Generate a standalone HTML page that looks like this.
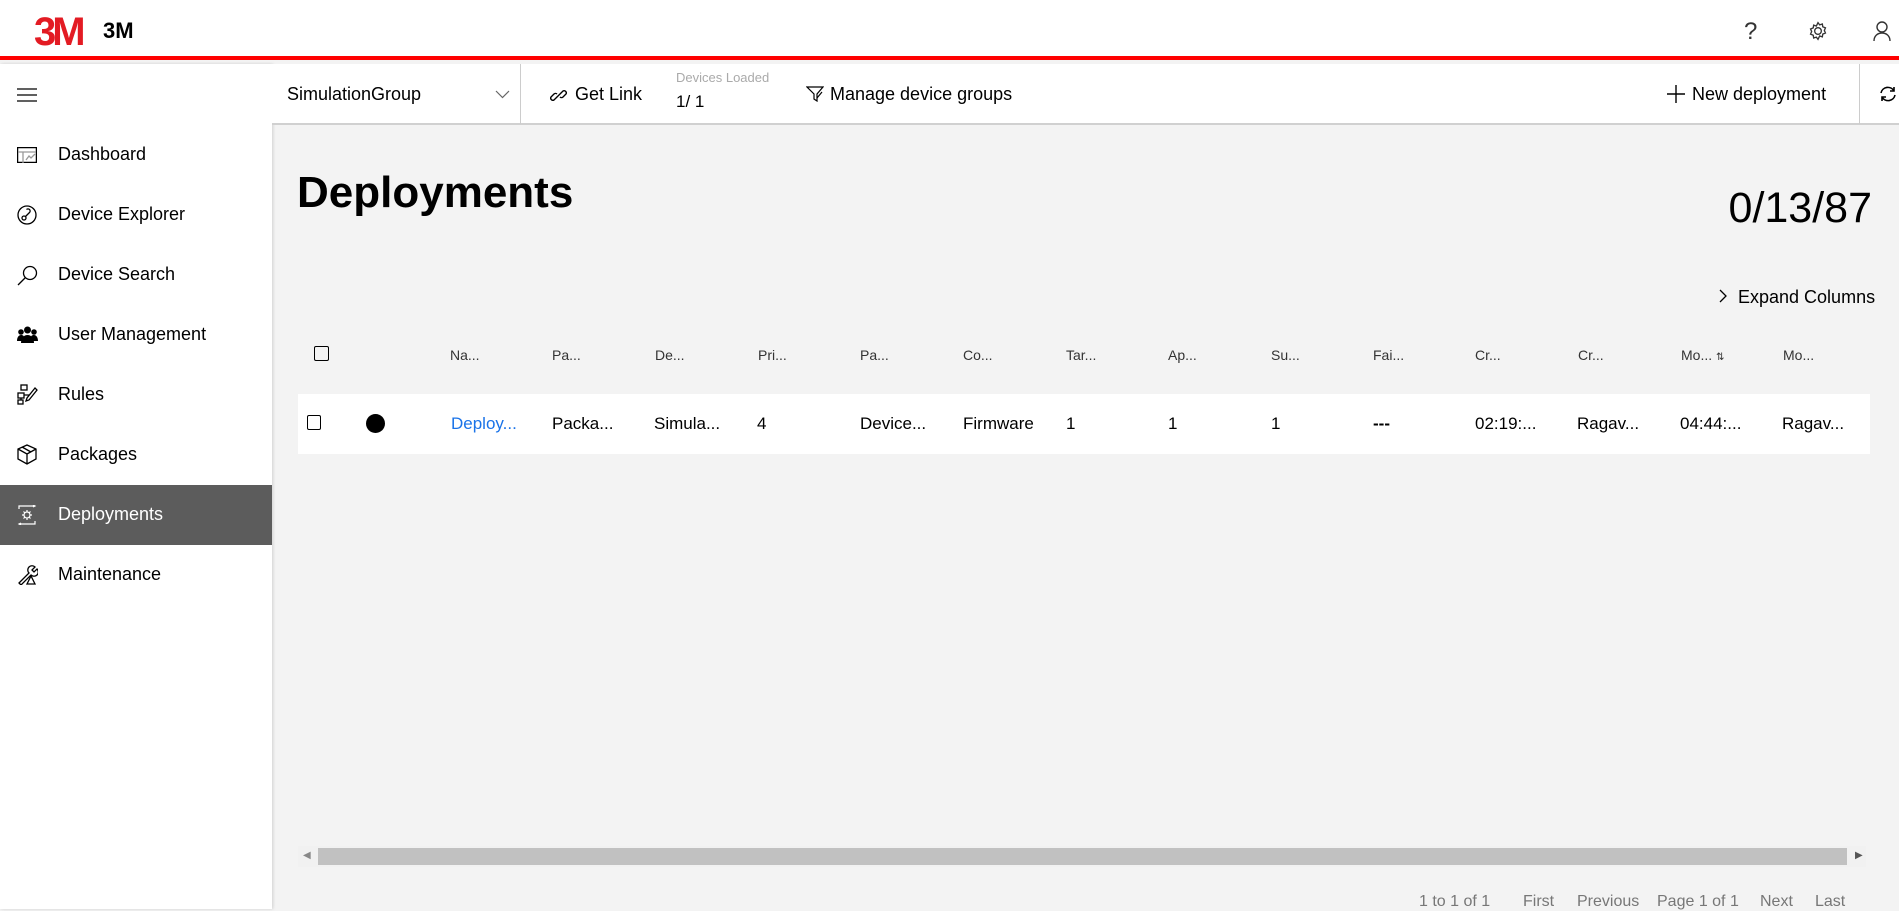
<!DOCTYPE html>
<html><head><meta charset="utf-8"><style>
*{margin:0;padding:0;box-sizing:border-box}
body{width:1899px;height:909px;overflow:hidden;font-family:"Liberation Sans",sans-serif;background:#f3f3f3;position:relative;color:#000}
.a{position:absolute;white-space:nowrap}
#hdr{left:0;top:0;width:1899px;height:60px;background:#fff;border-bottom:4px solid #f00}
#side{left:0;top:64px;width:272px;height:845px;background:#fff;box-shadow:1px 0 3px rgba(0,0,0,.15)}
#tb{left:272px;top:64px;width:1627px;height:61px;background:#fff;border-bottom:2px solid #d0d0d0}
.nav{position:absolute;left:58px;font-size:18px}
.ic{position:absolute;left:17px}
.th{font-size:14px;color:#333;top:347px}
.td{font-size:17px;top:414px}
.pg{font-size:16px;color:#777;top:893px}
</style></head><body>
<div id="hdr" class="a">
 <div class="a" style="left:34px;top:12px;font:bold 40px 'Liberation Sans',sans-serif;color:#e31b23;letter-spacing:-4px;line-height:40px">3M</div>
 <div class="a" style="left:103px;top:18px;font:bold 22px 'Liberation Sans',sans-serif">3M</div>
 <div class="a" style="left:1744px;top:18px;font-size:24px;color:#333">?</div>
 <svg class="a" style="left:1808px;top:21px" width="20" height="20" viewBox="0 0 18 18" fill="none" stroke="#333" stroke-width="1.2"><circle cx="9" cy="9" r="3"/><path d="M9 1.5l1.5 2 2.4-.8.4 2.5 2.4 1-1 2.3 1 2.3-2.4 1-.4 2.5-2.4-.8L9 16.5l-1.5-2-2.4.8-.4-2.5-2.4-1 1-2.3-1-2.3 2.4-1 .4-2.5 2.4.8z"/></svg>
 <svg class="a" style="left:1873px;top:20px" width="18" height="22" viewBox="0 0 18 22" fill="none" stroke="#333" stroke-width="1.4"><circle cx="9" cy="7" r="5"/><path d="M1 21c0-5 3.5-8 8-8s8 3 8 8"/></svg>
</div>
<div id="side" class="a">
 <svg class="ic" style="top:24px" width="20" height="14"><path d="M0 1h20M0 7h20M0 13h20" stroke="#000" stroke-width="1.2"/></svg>
 <svg class="ic" style="top:83px" width="20" height="16" fill="none" stroke="#000" stroke-width="1.3"><rect x=".6" y=".6" width="18.8" height="14.8"/><path d="M1 5h18M6 5v11M9 13l3-4 2 2 4-4" stroke="#999"/></svg>
 <div class="nav" style="top:80px">Dashboard</div>
 <svg class="ic" style="top:141px" width="20" height="20" fill="none" stroke="#000" stroke-width="1.3"><circle cx="10" cy="10" r="9"/><circle cx="7" cy="13" r="2"/><path d="M8.5 11.5l4-4a2 2 0 0 0-3-3"/></svg>
 <div class="nav" style="top:140px">Device Explorer</div>
 <svg class="ic" style="top:201px" width="21" height="21" fill="none" stroke="#000" stroke-width="1.3"><circle cx="13" cy="8" r="6.5"/><path d="M8.5 12.5L1 20"/></svg>
 <div class="nav" style="top:200px">Device Search</div>
 <svg class="ic" style="top:262px" width="21" height="18" fill="#000"><circle cx="10.5" cy="4" r="3.5"/><circle cx="4" cy="6" r="2.8"/><circle cx="17" cy="6" r="2.8"/><path d="M4 17c0-5 3-8 6.5-8s6.5 3 6.5 8z"/><path d="M0 15c0-4 2-6 4-6s3 1 3 2v4zM21 15c0-4-2-6-4-6s-3 1-3 2v4z"/></svg>
 <div class="nav" style="top:260px">User Management</div>
 <svg class="ic" style="top:320px" width="21" height="21" fill="none" stroke="#000" stroke-width="1.3"><rect x="4" y="1" width="6" height="5"/><rect x="1" y="9" width="6" height="5"/><rect x="1" y="16" width="5" height="4"/><path d="M7 11h5M4 14v2M18 4l-8 10 -1 3 3-1 8-10z"/></svg>
 <div class="nav" style="top:320px">Rules</div>
 <svg class="ic" style="top:380px" width="20" height="21" fill="none" stroke="#000" stroke-width="1.3"><path d="M10 1l9 4v10l-9 5-9-5V5zM1 5l9 5 9-5M10 10v10M5 3l9 5"/></svg>
 <div class="nav" style="top:380px">Packages</div>
 <div class="a" style="left:0;top:421px;width:272px;height:60px;background:#5c5c5c"></div>
 <svg class="ic" style="top:441px" width="20" height="20" fill="none" stroke="#fff" stroke-width="1.2"><path d="M2 4V1h16M16 0l2 1-2 1M18 16v3H2M4 18l-2 1 2 1"/><circle cx="10" cy="10" r="3"/><path d="M10 5v2M10 13v2M5 10h2M13 10h2M6.5 6.5l1.5 1.5M12 12l1.5 1.5M13.5 6.5L12 8M8 12l-1.5 1.5"/></svg>
 <div class="nav" style="top:440px;color:#fff">Deployments</div>
 <svg class="ic" style="top:500px" width="21" height="21" fill="none" stroke="#000" stroke-width="1.3"><path d="M2 19L12 9a4 4 0 0 1 6-6l-3 3 2 2 3-3a4 4 0 0 1-6 6L4 21z"/><path d="M14 12l-4 8h8z"/></svg>
 <div class="nav" style="top:500px">Maintenance</div>
</div>
<div id="tb" class="a">
 <div class="a" style="left:15px;top:20px;font-size:18px">SimulationGroup</div>
 <svg class="a" style="left:223px;top:26px" width="15" height="9"><path d="M1 1l6.5 6.5 6.5-6.5" fill="none" stroke="#666" stroke-width="1.2"/></svg>
 <div class="a" style="left:248px;top:0;width:1px;height:60px;background:#ccc"></div>
 <svg class="a" style="left:278px;top:23px" width="17" height="17" fill="none" stroke="#000" stroke-width="1.4"><path d="M7 10l-3 3a2.2 2.2 0 0 1-3-3l3-3a2.2 2.2 0 0 1 3 0M10 7l3-3a2.2 2.2 0 0 1 3 3l-3 3a2.2 2.2 0 0 1-3 0M6 11l5-5"/></svg>
 <div class="a" style="left:303px;top:20px;font-size:18px">Get Link</div>
 <div class="a" style="left:404px;top:6px;font-size:13px;color:#aaa">Devices Loaded</div>
 <div class="a" style="left:404px;top:28px;font-size:17px">1/ 1</div>
 <svg class="a" style="left:534px;top:22px" width="18" height="16" fill="none" stroke="#000" stroke-width="1.2"><path d="M1 1h16l-6 7v7l-3-2V8z"/><path d="M16 6l-5 6"/></svg>
 <div class="a" style="left:558px;top:20px;font-size:18px">Manage device groups</div>
 <svg class="a" style="left:1395px;top:21px" width="18" height="18"><path d="M9 0v18M0 9h18" stroke="#000" stroke-width="1.4"/></svg>
 <div class="a" style="left:1420px;top:20px;font-size:18px">New deployment</div>
 <div class="a" style="left:1587px;top:0;width:1px;height:60px;background:#ccc"></div>
 <svg class="a" style="left:1607px;top:21px" width="18" height="18" fill="none" stroke="#000" stroke-width="1.6"><path d="M15 6a7 7 0 0 0-13 2M3 12a7 7 0 0 0 13-2M15 2v4h-4M3 16v-4h4"/></svg>
</div>
<div class="a" style="left:297px;top:168px;font:bold 44px 'Liberation Sans',sans-serif">Deployments</div>
<div class="a" style="left:1720px;top:184px;font-size:43px;width:152px;text-align:right">0/13/87</div>
<svg class="a" style="left:1719px;top:289px" width="9" height="14"><path d="M1 1l6 6-6 6" fill="none" stroke="#000" stroke-width="1.3"/></svg>
<div class="a" style="left:1738px;top:287px;font-size:18px">Expand Columns</div>
<div class="a" style="left:314px;top:346px;width:15px;height:15px;border:1.5px solid #000;border-radius:2px"></div>
<div class="a th" style="left:450px">Na...</div><div class="a th" style="left:552px">Pa...</div><div class="a th" style="left:655px">De...</div><div class="a th" style="left:758px">Pri...</div><div class="a th" style="left:860px">Pa...</div><div class="a th" style="left:963px">Co...</div><div class="a th" style="left:1066px">Tar...</div><div class="a th" style="left:1168px">Ap...</div><div class="a th" style="left:1271px">Su...</div><div class="a th" style="left:1373px">Fai...</div><div class="a th" style="left:1475px">Cr...</div><div class="a th" style="left:1578px">Cr...</div><div class="a th" style="left:1681px">Mo... <span style="font-size:10px">&#8645;</span></div><div class="a th" style="left:1783px">Mo...</div>
<div class="a" style="left:298px;top:394px;width:1572px;height:60px;background:#fff"></div>
<div class="a" style="left:307px;top:415px;width:14px;height:15px;border:1.5px solid #000;border-radius:2px"></div>
<div class="a" style="left:366px;top:414px;width:19px;height:19px;border-radius:50%;background:#000"></div>
<div class="a td" style="left:451px;color:#1a73e8">Deploy...</div><div class="a td" style="left:552px">Packa...</div><div class="a td" style="left:654px">Simula...</div><div class="a td" style="left:757px">4</div><div class="a td" style="left:860px">Device...</div><div class="a td" style="left:963px">Firmware</div><div class="a td" style="left:1066px">1</div><div class="a td" style="left:1168px">1</div><div class="a td" style="left:1271px">1</div><div class="a td" style="left:1373px;font-weight:bold">---</div><div class="a td" style="left:1475px">02:19:...</div><div class="a td" style="left:1577px">Ragav...</div><div class="a td" style="left:1680px">04:44:...</div><div class="a td" style="left:1782px">Ragav...</div>
<div class="a" style="left:298px;top:846px;width:1568px;height:21px;background:#f1f1f1"></div>
<div class="a" style="left:318px;top:848px;width:1529px;height:17px;background:#c1c1c1"></div>
<div class="a" style="left:303px;top:850px;font-size:10px;color:#888">&#9664;</div>
<div class="a" style="left:1855px;top:850px;font-size:10px;color:#555">&#9654;</div>
<div class="a pg" style="left:1419px">1 to 1 of 1</div>
<div class="a pg" style="left:1523px">First</div>
<div class="a pg" style="left:1577px">Previous</div>
<div class="a pg" style="left:1657px">Page 1 of 1</div>
<div class="a pg" style="left:1760px">Next</div>
<div class="a pg" style="left:1815px">Last</div>
</body></html>
